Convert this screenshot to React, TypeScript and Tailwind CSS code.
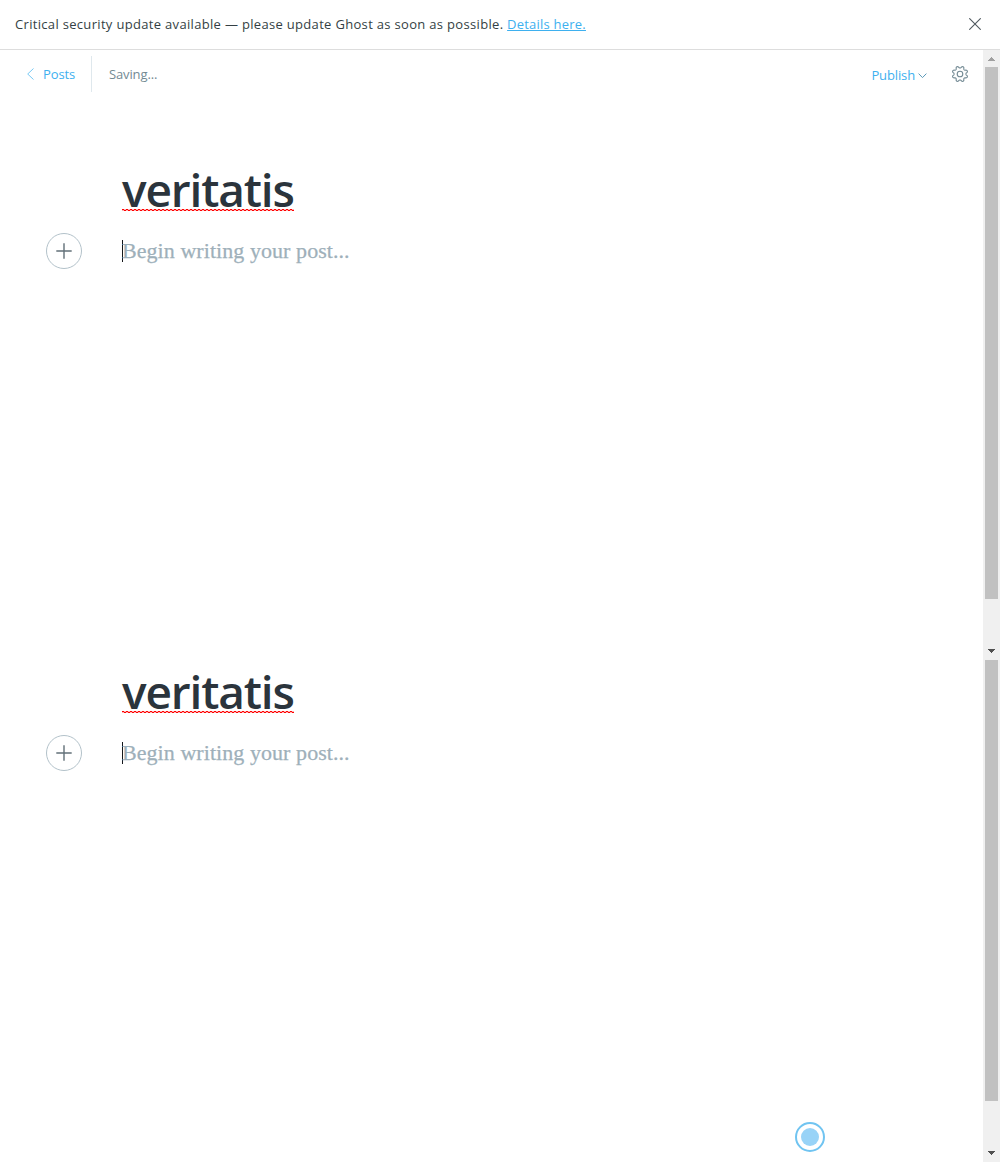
const gearPath = (() => {
  const points: string[] = [];
  for (let i = 0; i < 96; i++) {
    const a = (i / 96) * Math.PI * 2;
    const wave = Math.tanh(1.6 * -Math.cos(8 * a));
    const r = 6.9 + 1.05 * wave;
    points.push(`${(8 + r * Math.sin(a)).toFixed(2)} ${(8 - r * Math.cos(a)).toFixed(2)}`);
  }
  return `M${points.join('L')}Z`;
})();

function Squiggle() {
  return (
    <svg className="absolute left-0 top-[44px]" width="172" height="2" shapeRendering="crispEdges">
      <defs>
        <pattern id="squiggle" width="4" height="2" patternUnits="userSpaceOnUse">
          <path d="M0 0h2v1h-2zM2 1h2v1h-2z" fill="#ff0000" />
          <path d="M2 0h2v1h-2zM0 1h2v1h-2z" fill="#ff0000" fillOpacity=".3" />
        </pattern>
      </defs>
      <rect width="172" height="2" fill="url(#squiggle)" />
    </svg>
  );
}

function Post() {
  return (
    <section className="h-[502px] pl-[46px]">
      <h1 className="relative ml-[76px] h-[68px] w-[172px] whitespace-nowrap font-['Open_Sans'] text-[46px] font-semibold leading-[48px] tracking-[-1.15px] text-[#2b343c]">
        veritatis
        <Squiggle />
      </h1>
      <div className="flex h-9 items-center">
        <button className="flex size-9 items-center justify-center rounded-full border border-[#b3c2ca]" aria-label="Add">
          <svg width="16" height="16" stroke="#627078" strokeWidth="1.4"><path d="M8 .3v15.4M.3 8h15.4" /></svg>
        </button>
        <div className="ml-10 h-[22px] w-px bg-[#15171a]" />
        <p className="-ml-px whitespace-nowrap font-['Liberation_Serif'] text-[22px] leading-9 tracking-[0.06px] text-[#9eb0ba] [-webkit-text-stroke:0.25px_#9eb0ba]">Begin writing your post...</p>
      </div>
    </section>
  );
}

function Arrow({ up = false }: { up?: boolean }) {
  return (
    <svg className="ml-[5px] shrink-0" width="7" height="4" shapeRendering="crispEdges">
      {up ? <path d="M3 0h1v1h1v1h1v1h1v1H0V3h1V2h1V1h1z" fill="#a0a0a0" /> : <path d="M0 0h7v1H6v1H5v1H4v1H3V3H2V2H1V1H0z" fill="#505050" />}
    </svg>
  );
}

export default function App() {
  return (
    <div className="flex h-[1162px] w-[1000px] flex-col overflow-hidden bg-white font-['Open_Sans']">
      <div className="flex h-[50px] shrink-0 items-center border-b border-[#dddddd] pl-[15px] pr-[19px]">
        <p className="whitespace-nowrap text-[13px] tracking-[0.32px] text-[#343f44]">
          Critical security update available — please update Ghost as soon as possible.{' '}
          <a className="tracking-[0.22px] text-[#3eb0ef] underline">Details here.</a>
        </p>
        <svg className="-mt-px ml-auto" width="12" height="12" stroke="#50595f" strokeWidth="1.1"><path d="M.3.3l11.4 11.4M11.7.3L.3 11.7" /></svg>
      </div>
      <div className="flex min-h-0 flex-1">
        <main className="relative w-[983px]">
          <header className="flex h-[49px] items-center pl-[27px] pr-[15px] text-[13px] tracking-[-0.13px]">
            <svg className="-mt-px" width="7" height="12" fill="none" stroke="#77c9f4" strokeWidth="1"><path d="M6.5.5L.7 6l5.8 5.5" /></svg>
            <span className="ml-[9px] w-8 whitespace-nowrap text-[#3eb0ef]">Posts</span>
            <div className="ml-4 mt-[-2px] h-9 w-px bg-[#dfe8ed]" />
            <span className="ml-[17px] text-[#738a94]">Saving...</span>
            <span className="ml-auto mt-[2px] text-[#3eb0ef]">Publish</span>
            <svg className="ml-[3px] mt-[3px]" width="9" height="6" fill="none" stroke="#5b99b8"><path d="M.6.6l3.9 4 3.9-4" /></svg>
            <svg className="-mt-px ml-[25px] overflow-visible" width="16" height="16" fill="none" stroke="#738a94" strokeWidth="1.1"><path d={gearPath} /><circle cx="8" cy="8" r="2.8" /></svg>
          </header>
          <div className="pt-[66px]">
            <Post />
            <Post />
          </div>
          <div className="absolute left-[795px] top-[1072px] flex size-[30px] items-center justify-center rounded-full border-2 border-[#70c4f1]">
            <div className="size-[18px] rounded-full bg-[#98d3f7]" />
          </div>
        </main>
        <aside className="flex w-[17px] flex-col bg-[#f0f0f0]">
          <div className="flex h-[17px] items-center"><Arrow up /></div>
          <div className="ml-[2px] h-[532px] w-[13px] bg-[#c1c1c1]" />
          <div className="mt-[50px]"><Arrow /></div>
          <div className="ml-[2px] mt-[7px] h-[441px] w-[13px] bg-[#c1c1c1]" />
          <div className="mt-[50px]"><Arrow /></div>
        </aside>
      </div>
    </div>
  );
}
